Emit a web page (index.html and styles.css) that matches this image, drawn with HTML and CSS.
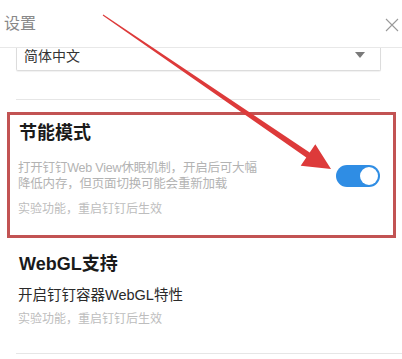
FILE: index.html
```html
<!DOCTYPE html>
<html lang="zh-CN">
<head>
    <meta charset="UTF-8">
    <title>设置</title>
    <link rel="stylesheet" href="styles.css">
</head>
<body>
    <div class="dialog">
        <div class="dialog-header">
            <span class="dialog-title">设置</span>
            <span class="close-btn">
                <svg width="14" height="14" viewBox="0 0 14 14"><path d="M1 1L13 13M13 1L1 13" stroke="#9a9a9a" stroke-width="1.1" fill="none"/></svg>
            </span>
        </div>
        <div class="dialog-body">
            <div class="select-box">
                <span class="select-value">简体中文</span>
                <span class="caret"></span>
            </div>
            <div class="divider"></div>

            <div class="setting-item">
                <div class="setting-title">节能模式</div>
                <div class="setting-row">
                    <div class="setting-desc">打开钉钉Web View休眠机制，开启后可大幅<br>降低内存，但页面切换可能会重新加载</div>
                    <div class="switch on"><span class="knob"></span></div>
                </div>
                <div class="setting-note">实验功能，重启钉钉后生效</div>
            </div>

            <div class="setting-item second">
                <div class="setting-title">WebGL支持</div>
                <div class="setting-text">开启钉钉容器WebGL特性</div>
                <div class="setting-note">实验功能，重启钉钉后生效</div>
            </div>
            <div class="divider wide"></div>
        </div>
    </div>

    <!-- annotation drawn over the screenshot -->
    <svg class="annotation" width="402" height="359" viewBox="0 0 402 359">
        <rect x="8.5" y="113.5" width="386" height="123" fill="none" stroke="#c25353" stroke-width="3"/>
        <polygon points="103.3,14.6 309.7,152.5 315.3,144.3 331,169 300.7,165.7 306.3,157.5 102.7,15.4" fill="#dd3a3a"/>
    </svg>
</body>
</html>
```

FILE: styles.css
```css
body {
    margin: 0;
    background: #fff;
    font-family: "Liberation Sans", "Noto Sans CJK SC", sans-serif;
    width: 402px;
    height: 359px;
    overflow: hidden;
    position: relative;
}
.dialog-header {
    height: 47px;
    border-bottom: 1px solid #e8e8e8;
    display: flex;
    align-items: center;
    justify-content: space-between;
    padding: 0 3px 0 4px;
}
.dialog-title {
    font-size: 16px;
    color: #888;
    margin-top: -3px;
}
.close-btn {
    display: flex;
    margin-top: 2px;
}
.dialog-body {
    height: 311px;
    overflow: hidden;
}
/* the top of the select is scrolled away under the header */
.select-box {
    margin: 0 21px 0 16px;
    height: 22px;
    border: 1px solid #dcdcdc;
    border-top: none;
    border-radius: 0 0 2px 2px;
    box-shadow: 0 1px 1px rgba(0,0,0,0.06);
    display: flex;
    align-items: flex-start;
    justify-content: space-between;
    padding: 0 15px 0 7px;
    font-size: 14px;
    color: #333;
}
.select-value {
    line-height: 14px;
    padding-top: 1px;
}
.caret {
    width: 0;
    height: 0;
    border-left: 5px solid transparent;
    border-right: 5px solid transparent;
    border-top: 6px solid #7a7a7a;
    margin-top: 4px;
}
.divider {
    height: 1px;
    background: #e6e6e6;
    margin: 28px 22px 0 16px;
}
.divider.wide {
    margin: 26px 0 0 16px;
}
.setting-item {
    padding: 21px 22px 0 19px;
}
.setting-item.second {
    padding-top: 35px;
}
.setting-title {
    font-size: 18px;
    font-weight: bold;
    color: #1a1a1a;
    line-height: 24px;
}
.setting-row {
    display: flex;
    align-items: center;
    justify-content: space-between;
    margin-top: 15px;
}
.setting-desc {
    font-size: 12.5px;
    letter-spacing: -0.2px;
    line-height: 16px;
    color: #b3b3b3;
    margin-left: -1px;
}
.setting-note {
    font-size: 12px;
    line-height: 16px;
    color: #bdbdbd;
    margin-top: 9px;
    margin-left: -1px;
}
.setting-text {
    font-size: 14.5px;
    line-height: 20px;
    color: #2a2a2a;
    margin-top: 9px;
    margin-left: -1px;
}
.second .setting-note {
    margin-top: 6px;
}
.switch {
    width: 44px;
    height: 22px;
    border-radius: 11px;
    background: #2f8de4;
    display: flex;
    align-items: center;
    justify-content: flex-end;
    padding: 0 2px;
    box-sizing: border-box;
}
.knob {
    width: 18px;
    height: 18px;
    border-radius: 50%;
    background: #fff;
}
.annotation {
    position: absolute;
    left: 0;
    top: 0;
    pointer-events: none;
}
```
